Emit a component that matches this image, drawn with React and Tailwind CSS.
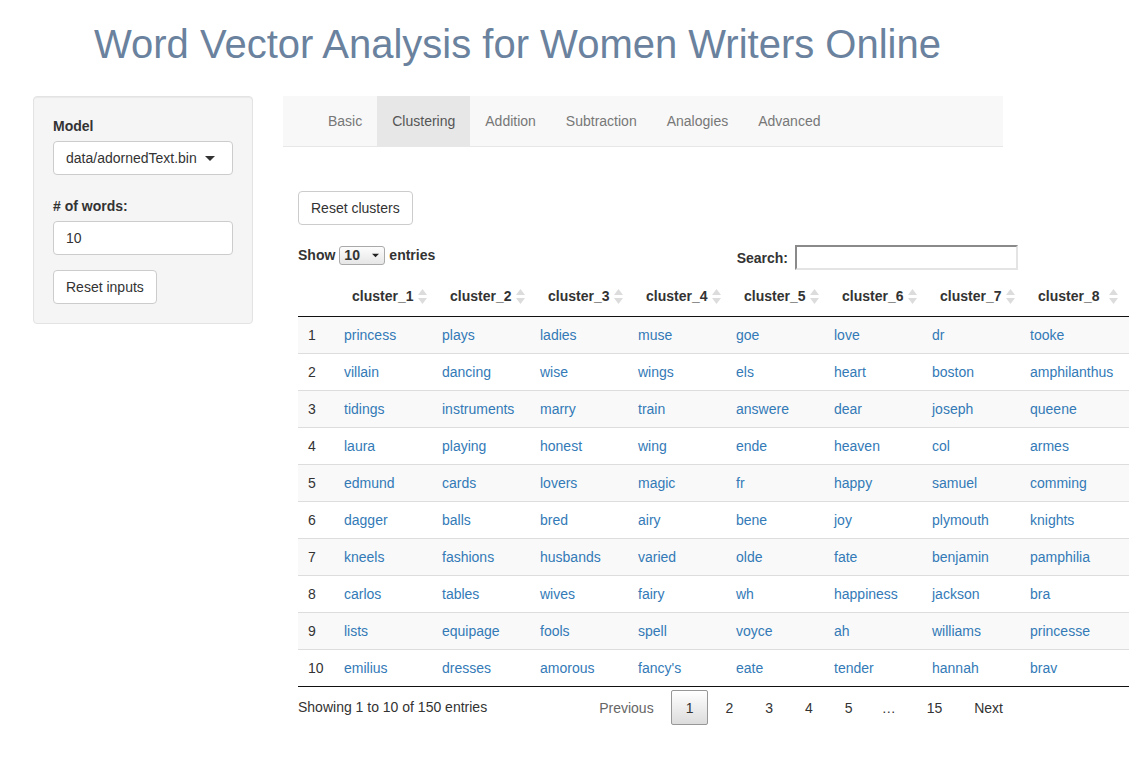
import React from 'react';

const tabs = ['Basic', 'Clustering', 'Addition', 'Subtraction', 'Analogies', 'Advanced'];

const rows = [
  ['princess', 'plays', 'ladies', 'muse', 'goe', 'love', 'dr', 'tooke'],
  ['villain', 'dancing', 'wise', 'wings', 'els', 'heart', 'boston', 'amphilanthus'],
  ['tidings', 'instruments', 'marry', 'train', 'answere', 'dear', 'joseph', 'queene'],
  ['laura', 'playing', 'honest', 'wing', 'ende', 'heaven', 'col', 'armes'],
  ['edmund', 'cards', 'lovers', 'magic', 'fr', 'happy', 'samuel', 'comming'],
  ['dagger', 'balls', 'bred', 'airy', 'bene', 'joy', 'plymouth', 'knights'],
  ['kneels', 'fashions', 'husbands', 'varied', 'olde', 'fate', 'benjamin', 'pamphilia'],
  ['carlos', 'tables', 'wives', 'fairy', 'wh', 'happiness', 'jackson', 'bra'],
  ['lists', 'equipage', 'fools', 'spell', 'voyce', 'ah', 'williams', 'princesse'],
  ['emilius', 'dresses', 'amorous', "fancy's", 'eate', 'tender', 'hannah', 'brav'],
];

const colWidths = [36, 98, 98, 98, 98, 98, 98, 98, 103, 100];
const tableWidth = colWidths.reduce((a, b) => a + b, 0);

function SortIcon() {
  return (
    <svg className="absolute right-[5px] top-[13px]" width="9" height="15" viewBox="0 0 9 15">
      <path d="M4.5 0 L9 6 L0 6 Z" fill="#dcdcdc" />
      <path d="M0 9 L9 9 L4.5 15 Z" fill="#dcdcdc" />
    </svg>
  );
}

function Caret({ w = 10, h = 5, color = '#333' }) {
  return (
    <svg width={w} height={h} viewBox="0 0 10 5">
      <path d="M0 0 L10 0 L5 5 Z" fill={color} />
    </svg>
  );
}

export default function App() {
  const pages = ['1', '2', '3', '4', '5'];

  return (
    <div className="w-full min-h-[778px] overflow-hidden bg-white text-[14px] leading-[20px] text-[#333] font-['Liberation_Sans',Arial,sans-serif]">
      <h1 className="pl-[94px] pt-[22px] text-[40px] leading-[44px] font-normal text-[#6a829e]">
        Word Vector Analysis for Women Writers Online
      </h1>

      <div className="flex mt-[30px] items-start">
        {/* sidebar */}
        <div className="ml-[33px] w-[220px] shrink-0 bg-[#f5f5f5] border border-[#e3e3e3] rounded-[4px] p-[19px] shadow-[inset_0_1px_1px_rgba(0,0,0,0.05)]">
          <div className="font-bold">Model</div>
          <div className="mt-[5px] h-[34px] bg-white border border-[#ccc] rounded-[4px] flex items-center justify-between pl-[12px] pr-[17px]">
            <span>data/adornedText.bin</span>
            <Caret />
          </div>
          <div className="mt-[21px] font-bold">
            # of words:
          </div>
          <div className="mt-[5px] h-[34px] bg-white border border-[#ccc] rounded-[4px] flex items-center pl-[12px]">
            10
          </div>
          <button className="mt-[15px] h-[34px] px-[12px] bg-white border border-[#ccc] rounded-[4px] text-[#333]">
            Reset inputs
          </button>
        </div>

        {/* main */}
        <div className="ml-[30px] shrink-0">
          <div className="w-[720px] h-[51px] bg-[#f8f8f8] border-b border-[#e7e7e7] flex pl-[30px]">
            {tabs.map((t) => (
              <div
                key={t}
                className={
                  t === 'Clustering'
                    ? 'px-[15px] py-[15px] bg-[#e7e7e7] text-[#555]'
                    : 'px-[15px] py-[15px] text-[#777]'
                }
              >
                {t}
              </div>
            ))}
          </div>

          <div className="pl-[15px] w-[735px]">
            <button className="mt-[44px] h-[34px] px-[12px] bg-white border border-[#ccc] rounded-[4px] text-[#333]">
              Reset clusters
            </button>

            {/* length + filter */}
            <div className="mt-[20px] flex justify-between items-start">
              <div className="flex items-center font-bold">
                <span>Show</span>
                <div className="ml-[4px] w-[46px] h-[19px] border border-[#aaa] rounded-[3px] bg-[linear-gradient(#fdfdfd,#e6e6e6)] flex items-center justify-between pl-[4px] pr-[5px]">
                  <span className="text-[14px] leading-[17px]">10</span>
                  <Caret w={7} h={5} color="#222" />
                </div>
                <span className="ml-[4px]">entries</span>
              </div>
              <div className="flex items-center font-bold">
                <span>Search:</span>
                <div className="ml-[7px] w-[223px] h-[25px] bg-white border-2 border-t-[#8a8a8a] border-l-[#8a8a8a] border-b-[#e4e4e4] border-r-[#e4e4e4]" />
              </div>
            </div>

            {/* table */}
            <table className="mt-[6px] table-fixed border-collapse" style={{ width: tableWidth }}>
              <colgroup>
                {colWidths.map((w, i) => (
                  <col key={i} style={{ width: w }} />
                ))}
              </colgroup>
              <thead>
                <tr className="border-b border-[#111]">
                  <th className="py-[10px]" />
                  {Array.from({ length: 8 }).map((_, i) => (
                    <th key={i} className="relative text-left font-bold pl-[18px] pr-[18px] py-[10px] whitespace-nowrap">
                      cluster_{i + 1}
                      <SortIcon />
                    </th>
                  ))}
                  <th className="py-[10px]" />
                </tr>
              </thead>
              <tbody>
                {rows.map((r, ri) => (
                  <tr
                    key={ri}
                    className={
                      (ri % 2 === 0 ? 'bg-[#f9f9f9] ' : 'bg-white ') +
                      (ri === 0 ? '' : 'border-t border-[#ddd]')
                    }
                  >
                    <td className="px-[10px] py-[8px]">{ri + 1}</td>
                    {r.map((w, ci) => (
                      <td key={ci} className="px-[10px] py-[8px] text-[#337ab7] whitespace-nowrap">
                        {w}
                      </td>
                    ))}
                    <td className="py-[8px]" />
                  </tr>
                ))}
              </tbody>
            </table>
            <div className="h-px bg-[#111]" style={{ width: tableWidth }} />

            {/* info + paging */}
            <div className="flex justify-between items-start">
              <div className="pt-[10px]">Showing 1 to 10 of 150 entries</div>
              <div className="pt-[3px] flex items-center">
                <div className="h-[35px] px-[14px] border border-transparent flex items-center text-[#666]">Previous</div>
                {pages.map((p) => (
                  <div
                    key={p}
                    className={
                      p === '1'
                        ? 'ml-[2px] h-[35px] px-[14px] flex items-center border border-[#979797] rounded-[2px] bg-[linear-gradient(#ffffff,#dcdcdc)] text-[#333]'
                        : 'ml-[2px] h-[35px] px-[14px] flex items-center border border-transparent text-[#333]'
                    }
                  >
                    {p}
                  </div>
                ))}
                <div className="h-[35px] px-[14px] flex items-center text-[#333]">…</div>
                <div className="ml-[2px] h-[35px] px-[14px] flex items-center border border-transparent text-[#333]">15</div>
                <div className="ml-[2px] h-[35px] px-[14px] flex items-center border border-transparent text-[#333]">Next</div>
              </div>
            </div>
          </div>
        </div>
      </div>
    </div>
  );
}
